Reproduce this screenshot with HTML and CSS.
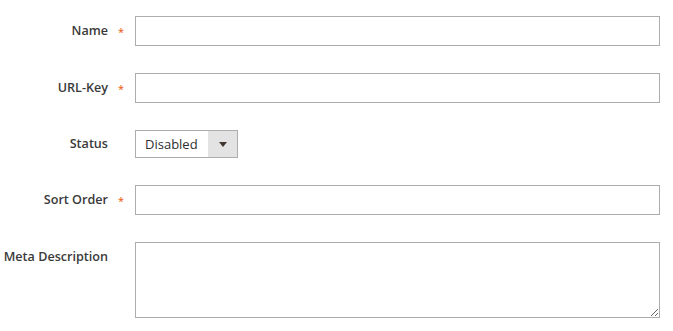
FILE: index.html
```html
<!DOCTYPE html>
<html lang="en">

<head>
    <meta charset="UTF-8">
    <meta name="viewport" content="width=device-width, initial-scale=1.0">
    <title>Category Form</title>
    <link rel="stylesheet" href="styles.css">
</head>

<body>
    <form class="admin-form">
        <div class="field">
            <label class="field-label required" for="name">Name</label>
            <input class="field-input" type="text" id="name" name="name">
        </div>

        <div class="field">
            <label class="field-label required" for="url-key">URL-Key</label>
            <input class="field-input" type="text" id="url-key" name="url_key">
        </div>

        <div class="field">
            <label class="field-label short" for="status">Status</label>
            <div class="select-wrap">
                <select class="field-select" id="status" name="status">
                    <option value="0">Disabled</option>
                    <option value="1">Enabled</option>
                </select>
                <span class="select-arrow"></span>
            </div>
        </div>

        <div class="field">
            <label class="field-label required" for="sort-order">Sort Order</label>
            <input class="field-input" type="text" id="sort-order" name="sort_order">
        </div>

        <div class="field">
            <label class="field-label" for="meta-description">Meta Description</label>
            <textarea class="field-textarea" id="meta-description" name="meta_description"></textarea>
        </div>
    </form>
</body>

</html>
```

FILE: styles.css
```css
body {
    margin: 0;
    font-family: "Open Sans", Arial, sans-serif;
    background-color: #fff;
    color: #303030;
}

.admin-form {
    display: flex;
    flex-direction: column;
    gap: 27px;
    padding-top: 16px;
}

.field {
    display: grid;
    grid-template-columns: 135px 525px;
    align-items: start;
}

.field-label {
    position: relative;
    display: block;
    text-align: right;
    padding-right: 27px;
    font-size: 12.6px;
    font-weight: 600;
    line-height: 30px;
    color: #3a3a3a;
    white-space: nowrap;
}

.field-label.short {
    line-height: 28px;
}

.field-label.required::after {
    content: "*";
    position: absolute;
    right: 11px;
    top: 1px;
    color: #eb5202;
    font-size: 11px;
    font-weight: 400;
}

.field-input,
.field-textarea {
    box-sizing: border-box;
    width: 525px;
    height: 30px;
    margin: 0;
    border: 1px solid #adadad;
    border-radius: 0;
    font-family: inherit;
    font-size: 13px;
    padding: 0 9px;
    outline: none;
}

.field-textarea {
    height: 76px;
    resize: vertical;
    padding: 6px 9px;
}

.select-wrap {
    position: relative;
    width: 103px;
    height: 28px;
}

.field-select {
    box-sizing: border-box;
    width: 103px;
    height: 28px;
    margin: 0;
    border: 1px solid #adadad;
    border-radius: 0;
    background-color: #fff;
    color: #303030;
    font-family: inherit;
    font-size: 13px;
    padding: 0 30px 0 9px;
    appearance: none;
    -webkit-appearance: none;
    outline: none;
}

.select-arrow {
    position: absolute;
    top: 1px;
    right: 1px;
    width: 29px;
    height: 26px;
    background-color: #e3e3e3;
    pointer-events: none;
}

.select-arrow::after {
    content: "";
    position: absolute;
    left: 11px;
    top: 11px;
    border-left: 4px solid transparent;
    border-right: 4px solid transparent;
    border-top: 5px solid #41362f;
}
```
